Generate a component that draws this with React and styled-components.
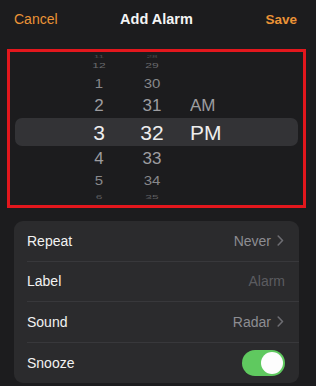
import React from 'react';
import styled, { createGlobalStyle } from 'styled-components';

const Global = createGlobalStyle`
    html, body {
        margin:0;
        padding:0;
        background:#1c1c1e;
    }
    body {
        font-family:"Liberation Sans", Arial, sans-serif;
        -webkit-font-smoothing:antialiased;
    }
`
const Page = styled.div`
    width:316px;
    height:386px;
    box-sizing:border-box;
    padding:0 10px 0 7px;
    background:#1c1c1e;
    overflow:hidden;
`
const Header = styled.header`
    height:38px;
    display:flex;
    align-items:center;
    justify-content:space-between;
    padding:0 9px 0 7px;
    position:relative;
    button {
        background:none;
        border:0;
        padding:0;
        color:#eb9336;
        font-family:inherit;
        font-size:14px;
    }
    .save {
        font-weight:bold;
        font-size:13.5px;
    }
    h1 {
        margin:0;
        position:absolute;
        left:0;
        right:0;
        text-align:center;
        color:#f4f4f4;
        font-size:14.5px;
        font-weight:bold;
        pointer-events:none;
    }
`
const Picker = styled.section`
    margin-top:11px;
    height:159px;
    box-sizing:border-box;
    border:3px solid #e3171d;
    padding:0 5px 0 5px;
    display:flex;
    flex-direction:column;
    overflow:hidden;
`
const WheelRow = styled.div`
    flex:0 0 ${p => p.$h}px;
    min-height:0;
    display:grid;
    grid-template-columns:58px 52px 54px 1fr;
    align-items:center;
    border-radius:7px;
    background:${p => p.$selected ? '#333336' : 'transparent'};
    color:${p => p.$color};
    font-size:${p => p.$size}px;
    line-height:1;
    span {
        display:block;
        text-align:center;
        transform:scaleY(${p => p.$sy});
    }
    .ampm {
        text-align:left;
        padding-left:11px;
    }
`
const Card = styled.section`
    margin:13px 7px 0 7px;
    background:#2b2b2d;
    border-radius:9px;
    padding-left:13px;
`
const Row = styled.div`
    height:40.5px;
    display:flex;
    align-items:center;
    justify-content:space-between;
    padding-right:14px;
    border-bottom:${p => p.$last ? '0' : '1px solid #38383b'};
    box-sizing:border-box;
    .name {
        color:#f2f2f2;
        font-size:14px;
    }
`
const Value = styled.span`
    display:flex;
    align-items:center;
    gap:6px;
    color:${p => p.$muted ? '#5c5c60' : '#8d8d92'};
    font-size:14px;
    padding-right:${p => p.$muted ? '0' : '1px'};
`
const Toggle = styled.span`
    width:43px;
    height:26px;
    border-radius:13px;
    background:#5fc95f;
    position:relative;
    &::after {
        content:'';
        position:absolute;
        right:2px;
        top:2px;
        width:22px;
        height:22px;
        border-radius:50%;
        background:#fdfdfd;
    }
`
const Chevron = () => (
    <svg width="7" height="11" viewBox="0 0 7 11">
        <path d="M1.2 1l4.3 4.5L1.2 10" fill="none" stroke="#6d6d72" strokeWidth="1.6" strokeLinecap="round" strokeLinejoin="round"/>
    </svg>
)

const wheel = [
    { h:7, size:10, sy:0.4, color:'#4a4a4c', v:['11','28',''] },
    { h:14, size:12, sy:0.62, color:'#6a6a6d', v:['12','29',''] },
    { h:20, size:15, sy:0.8, color:'#88888b', v:['1','30',''] },
    { h:25, size:17, sy:0.93, color:'#9d9da0', v:['2','31','AM'] },
    { h:28, size:21, sy:1, color:'#eeeeee', v:['3','32','PM'], selected:true },
    { h:24, size:17, sy:0.93, color:'#9d9da0', v:['4','33',''] },
    { h:20, size:15, sy:0.8, color:'#88888b', v:['5','34',''] },
    { h:14, size:12, sy:0.5, color:'#5e5e61', v:['6','35',''] },
]

const rows = [
    { name:'Repeat', value:'Never', chevron:true },
    { name:'Label', value:'Alarm', muted:true },
    { name:'Sound', value:'Radar', chevron:true },
]

const App = () => {
    return (
        <>
        <Global />
        <Page>
            <Header>
                <button>Cancel</button>
                <h1>Add Alarm</h1>
                <button className="save">Save</button>
            </Header>
            <Picker>
                {wheel.map((w, i) => (
                    <WheelRow key={i} $h={w.h} $size={w.size} $sy={w.sy} $color={w.color} $selected={w.selected}>
                        <i />
                        <span>{w.v[0]}</span>
                        <span>{w.v[1]}</span>
                        <span className="ampm">{w.v[2]}</span>
                    </WheelRow>
                ))}
            </Picker>
            <Card>
                {rows.map((r) => (
                    <Row key={r.name}>
                        <span className="name">{r.name}</span>
                        <Value $muted={r.muted}>
                            {r.value}
                            {r.chevron && <Chevron />}
                        </Value>
                    </Row>
                ))}
                <Row $last>
                    <span className="name">Snooze</span>
                    <Toggle />
                </Row>
            </Card>
        </Page>
        </>
    )
}
export default App;
